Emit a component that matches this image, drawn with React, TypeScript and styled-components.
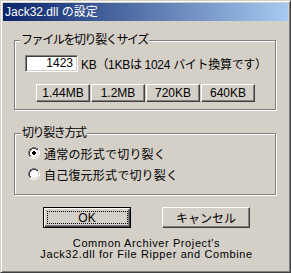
import React from "react";
import styled, { createGlobalStyle } from "styled-components";

const Global = createGlobalStyle`
  html, body { margin: 0; padding: 0; background: #d4d0c8; }
  body { font-family: "Liberation Sans", "Noto Sans CJK JP", sans-serif; font-size: 12px; color: #000; }
`;

const FONT = `"Liberation Sans", "Noto Sans CJK JP", sans-serif`;

const Window = styled.div`
  width: 291px;
  height: 273px;
  box-sizing: border-box;
  background: #d4d0c8;
  border: 1px solid;
  border-color: #d4d0c8 #404040 #404040 #d4d0c8;
  box-shadow: inset 1px 1px 0 #ffffff, inset -1px -1px 0 #808080;
  padding: 2px;
  display: flex;
  flex-direction: column;
`;

const TitleBar = styled.div`
  height: 18px;
  flex: none;
  background: linear-gradient(to right, #0a246a, #a6caf0);
  color: #fff;
  font-family: ${FONT};
  font-size: 12px;
  line-height: 18px;
  padding-left: 2px;
  white-space: nowrap;
`;

const Client = styled.div`
  display: flex;
  flex-direction: column;
  padding: 0 12px 0 11px;
`;

const GroupBox = styled.div<{ $top: number; $h: number }>`
  position: relative;
  margin-top: ${(p) => p.$top}px;
  height: ${(p) => p.$h}px;
  box-sizing: border-box;
  border: 1px solid #808080;
  box-shadow: 1px 1px 0 #ffffff, inset 1px 1px 0 #ffffff;
  display: flex;
  flex-direction: column;
`;

const Legend = styled.span<{ $left: number }>`
  position: absolute;
  top: -8px;
  left: ${(p) => p.$left}px;
  padding: 0 1px;
  background: #d4d0c8;
  line-height: 14px;
  font-size: 12px;
  letter-spacing: -1.4px;
  white-space: nowrap;
`;

const SizeRow = styled.div`
  display: flex;
  align-items: center;
  margin: 14px 0 0 10px;
  height: 17px;
`;

const Edit = styled.div`
  width: 53px;
  height: 17px;
  box-sizing: border-box;
  background: #fff;
  border: 1px solid;
  border-color: #808080 #ffffff #ffffff #808080;
  box-shadow: inset 1px 1px 0 #404040, inset -1px -1px 0 #d4d0c8;
  text-align: right;
  padding-right: 4px;
  line-height: 15px;
  font-size: 12px;
`;

const Note = styled.span`
  margin-left: 3px;
  white-space: nowrap;
  font-size: 12px;
  letter-spacing: -0.3px;
`;

const PresetRow = styled.div`
  display: flex;
  gap: 1px;
  margin: 12px 0 0 21px;
`;

const Button = styled.div<{ $w: number; $h: number; $default?: boolean }>`
  width: ${(p) => p.$w}px;
  height: ${(p) => p.$h}px;
  box-sizing: border-box;
  display: flex;
  align-items: center;
  justify-content: center;
  font-size: 12px;
  position: relative;
  border: 1px solid;
  border-color: ${(p) => (p.$default ? "#000 #000 #000 #000" : "#ffffff #404040 #404040 #ffffff")};
  box-shadow: ${(p) =>
    p.$default
      ? "inset 1px 1px 0 #ffffff, inset -1px -1px 0 #404040, inset -2px -2px 0 #808080"
      : "inset -1px -1px 0 #808080"};
`;

const Focus = styled.span`
  position: absolute;
  top: 3px;
  bottom: 3px;
  left: 3px;
  right: 2px;
  border: 1px dotted #000;
`;

const RadioList = styled.div`
  display: flex;
  flex-direction: column;
  gap: 9px;
  margin: 13px 0 0 13px;
`;

const RadioRow = styled.div`
  display: flex;
  align-items: center;
  gap: 4px;
  height: 12px;
  white-space: nowrap;
  font-size: 12px;
  letter-spacing: 0.2px;
`;

const Radio = ({ checked }: { checked?: boolean }) => (
  <svg width="12" height="12" viewBox="0 0 12 12" shapeRendering="crispEdges">
    <path d="M4 0h4v1H4zM2 1h2v1H2zM8 1h2v1H8zM1 2h1v2H1zM0 4h1v4H0zM1 8h1v2H1z" fill="#808080" />
    <path d="M4 1h4v1H4zM2 2h2v1H2zM8 2h2v1H8zM1 4h1v4H1zM2 3h1v1H2zM2 8h1v1H2z" fill="#404040" />
    <path d="M10 2h1v2h-1zM11 4h1v4h-1zM10 8h1v2h-1zM8 10h2v1H8zM2 10h2v1H2zM4 11h4v1H4z" fill="#ffffff" />
    <path d="M9 3h1v1H9zM10 4h1v4h-1zM9 8h1v1H9zM8 9h2v1H8zM2 9h2v1H2zM4 10h4v1H4z" fill="#d4d0c8" />
    <path d="M4 2h4v1H4zM3 3h6v1H3zM2 4h8v4H2zM3 8h6v1H3zM4 9h4v1H4z" fill="#ffffff" />
    {checked && <path d="M5 4h2v1H5zM4 5h4v2H4zM5 7h2v1H5z" fill="#000" />}
  </svg>
);

const ButtonRow = styled.div`
  display: flex;
  gap: 31px;
  margin: 12px 0 0 29px;
`;

const Credits = styled.div`
  margin-top: 10px;
  display: flex;
  flex-direction: column;
  align-items: center;
  padding-left: 3px;
`;

const CreditLine = styled.div`
  font-size: 11px;
  line-height: 11px;
  height: 11px;
  letter-spacing: 0.6px;
  white-space: nowrap;
`;

export default function App() {
  return (
    <>
      <Global />
      <Window>
        <TitleBar>Jack32.dll の設定</TitleBar>
        <Client>
          <GroupBox $top={19} $h={70}>
            <Legend $left={5}>ファイルを切り裂くサイズ</Legend>
            <SizeRow>
              <Edit>1423</Edit>
              <Note>KB（1KBは 1024 バイト換算です）</Note>
            </SizeRow>
            <PresetRow>
              <Button $w={54} $h={18}>1.44MB</Button>
              <Button $w={54} $h={18}>1.2MB</Button>
              <Button $w={54} $h={18}>720KB</Button>
              <Button $w={54} $h={18}>640KB</Button>
            </PresetRow>
          </GroupBox>
          <GroupBox $top={23} $h={62}>
            <Legend $left={6}>切り裂き方式</Legend>
            <RadioList>
              <RadioRow>
                <Radio checked />
                通常の形式で切り裂く
              </RadioRow>
              <RadioRow>
                <Radio />
                自己復元形式で切り裂く
              </RadioRow>
            </RadioList>
          </GroupBox>
          <ButtonRow>
            <Button $w={88} $h={21} $default>
              <Focus />
              OK
            </Button>
            <Button $w={88} $h={21}>キャンセル</Button>
          </ButtonRow>
          <Credits>
            <CreditLine>Common Archiver Project's</CreditLine>
            <CreditLine>Jack32.dll for File Ripper and Combine</CreditLine>
          </Credits>
        </Client>
      </Window>
    </>
  );
}
